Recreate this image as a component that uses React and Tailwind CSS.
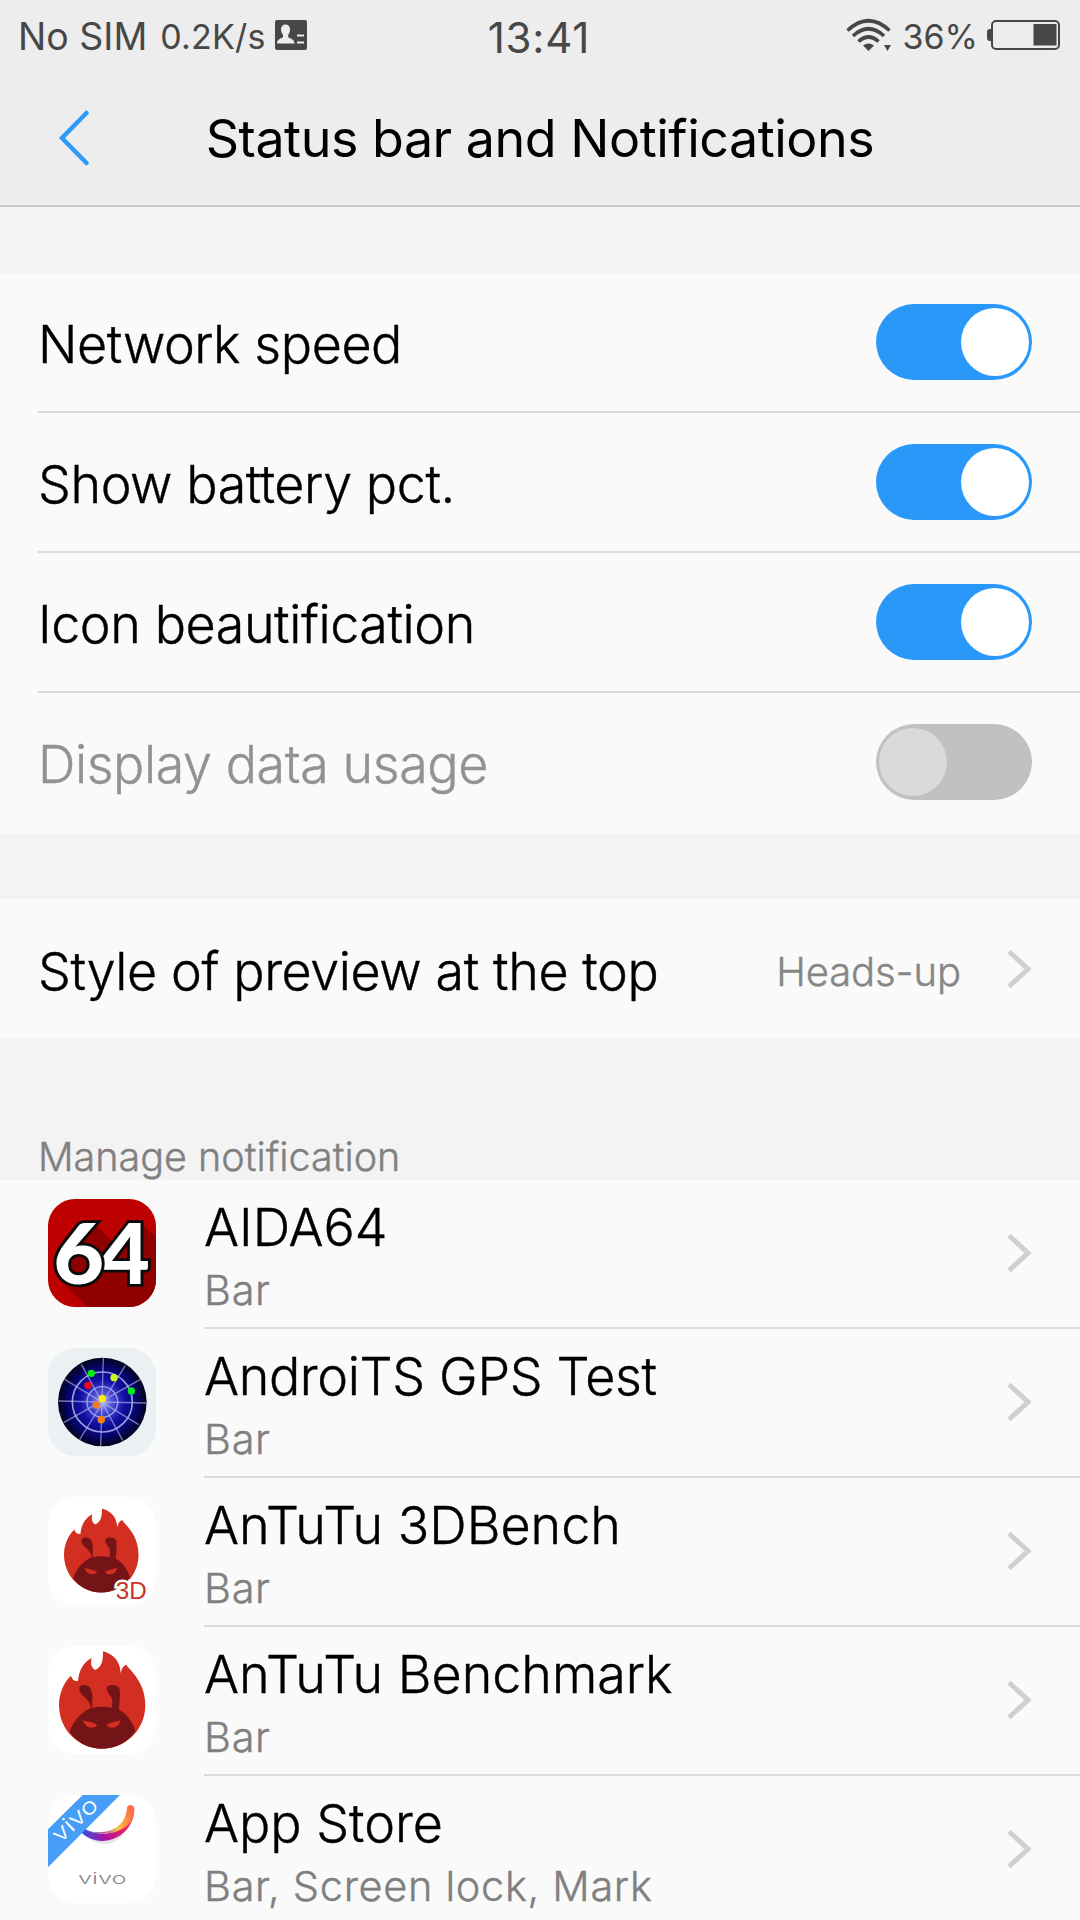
import React from 'react';

const switches = [
  { name: 'Network speed', on: true },
  { name: 'Show battery pct.', on: true },
  { name: 'Icon beautification', on: true },
  { name: 'Display data usage', on: false, disabled: true },
];

const AidaIcon = () => (
  <svg viewBox="54 57 324 324" className="h-[108px] w-[108px] rounded-[27px]">
    <rect x="54" y="57" width="324" height="324" fill="#bd0000" />
    <path d="M186 124l60 60 50-56h34l48 42v211H172L96 306z" fill="#8f0000" />
    <g
      fontFamily="Lato"
      fontWeight="900"
      fontSize="250"
      fill="#fff"
      stroke="#0b0b0b"
      strokeWidth="17"
      paintOrder="stroke"
    >
      <text x="207" y="311" textLength="153" lengthAdjust="spacingAndGlyphs">4</text>
      <text x="70" y="311" textLength="153" lengthAdjust="spacingAndGlyphs">6</text>
    </g>
  </svg>
);

const GpsIcon = () => (
  <svg viewBox="54 39 324 324" className="h-[108px] w-[108px] rounded-[27px]">
    <defs>
      <radialGradient id="radar">
        <stop offset="0" stopColor="#b9b9ff" />
        <stop offset="0.2" stopColor="#5558d6" />
        <stop offset="0.5" stopColor="#1010a4" />
        <stop offset="0.78" stopColor="#05056a" />
        <stop offset="1" stopColor="#02021c" />
      </radialGradient>
    </defs>
    <rect x="54" y="39" width="324" height="324" fill="#ebf1f3" />
    <circle cx="217" cy="201" r="133" fill="url(#radar)" />
    <g fill="none" stroke="#b4b4f0" strokeOpacity="0.85" strokeWidth="4">
      <circle cx="217" cy="201" r="46" />
      <circle cx="217" cy="201" r="90" strokeWidth="5" />
      <path
        strokeOpacity="0.65"
        d="M220 69L212 333M85 198l264 6M154 88l124 228M286 91L149 314M104 133l222 136M330 134L101 263"
      />
    </g>
    <circle cx="184" cy="115" r="11" fill="#00ee18" />
    <circle cx="304" cy="168" r="11" fill="#00ee18" />
    <circle cx="252" cy="128" r="11" fill="#c8fb1c" />
    <circle cx="174" cy="151" r="11" fill="#fb0510" />
    <circle cx="217" cy="191" r="11" fill="#fff000" />
    <circle cx="199" cy="210" r="11" fill="#f57d1c" />
    <circle cx="214" cy="254" r="11" fill="#fb800c" />
  </svg>
);

const Flame = () => (
  <>
    <path
      d="M219 64C236 69 271 83 272 130C275 118 278 108 289 104C299 121 346 154 346 225C346 299 288 356 216 356C145 356 87 299 87 225C87 193 100 158 123 137C127 149 132 153 144 153C147 124 157 99 185 84C182 98 182 112 196 120C214 112 220 93 219 64Z"
      fill="#d22e21"
    />
    <path
      d="M119 305C136 258 172 238 183 235C179 215 175 212 156 194C145 183 143 166 160 165C177 163 182 173 186 188C189 204 185 220 187 234Q217 226 246 234C246 220 249 210 242 199C234 188 226 176 233 169C243 162 260 164 267 173C273 184 268 218 267 239C286 247 309 275 316 303C294 337 258 356 216 356C175 356 140 337 119 305Z"
      fill="#751417"
    />
    <path
      d="M158 270C173 276 188 275 202 285C198 292 189 294 181 293C171 292 163 284 158 270ZM272 270C257 276 244 275 229 285C233 292 242 294 250 293C260 292 268 284 272 270Z"
      fill="#d22e21"
    />
  </>
);

const Antutu3dIcon = () => (
  <svg viewBox="54 51 324 324" className="h-[108px] w-[108px] rounded-[27px]">
    <rect x="54" y="51" width="324" height="324" fill="#fff" />
    <g transform="translate(27 30) scale(0.863)">
      <Flame />
    </g>
    <text
      x="257"
      y="356"
      fontFamily="Liberation Sans"
      fontSize="71"
      textLength="93"
      lengthAdjust="spacingAndGlyphs"
      fill="#c93427"
      stroke="#fff"
      strokeWidth="15"
      paintOrder="stroke"
    >
      3D
    </text>
  </svg>
);

const AntutuIcon = () => (
  <svg viewBox="54 48 324 324" className="h-[108px] w-[108px] rounded-[27px]">
    <rect x="54" y="48" width="324" height="324" fill="#fff" />
    <Flame />
  </svg>
);

const StoreIcon = () => (
  <svg viewBox="54 45 324 324" className="h-[108px] w-[108px] overflow-visible">
    <defs>
      <linearGradient id="smile" x1="150" y1="150" x2="312" y2="90" gradientUnits="userSpaceOnUse">
        <stop offset="0" stopColor="#2f55dc" />
        <stop offset="0.35" stopColor="#a812a8" />
        <stop offset="0.68" stopColor="#e01f69" />
        <stop offset="1" stopColor="#ff5f45" />
      </linearGradient>
      <linearGradient id="glow" x1="160" y1="150" x2="305" y2="100" gradientUnits="userSpaceOnUse">
        <stop offset="0" stopColor="#29dcf2" />
        <stop offset="0.35" stopColor="#b45ba0" />
        <stop offset="0.65" stopColor="#ffc04a" />
        <stop offset="1" stopColor="#ff7043" />
      </linearGradient>
      <clipPath id="tile">
        <rect x="54" y="45" width="324" height="324" rx="81" />
      </clipPath>
    </defs>
    <g clipPath="url(#tile)">
      <rect x="54" y="45" width="324" height="324" fill="#fff" />
      <path d="M155 158Q222 216 276 166Q222 204 155 158Z" fill="#ddd" stroke="#e4e4e8" strokeWidth="5" />
      <path d="M291 86C291 72 313 72 313 88C312 145 267 182 217 183C187 183 160 168 143 145L158 142C205 175 287 170 291 86Z" fill="url(#smile)" />
      <path d="M291 86C291 72 313 72 313 88C312 102 309 113 301 127C265 166 210 173 151 143C205 170 284 158 291 86Z" fill="url(#glow)" />
      <path d="M54 148L158 45H270L54 262Z" fill="#469ef8" />
    </g>
    <text
      transform="translate(91 191) rotate(-43) scale(1.5 1)"
      fontFamily="Inter"
      fontSize="69"
      textLength="108"
      lengthAdjust="spacingAndGlyphs"
      fill="#fff"
    >
      vivo
    </text>
    <text
      transform="translate(144 312) scale(1.5 1)"
      fontFamily="Inter"
      fontSize="47"
      textLength="97"
      lengthAdjust="spacingAndGlyphs"
      fill="#8a8a8a"
    >
      vivo
    </text>
  </svg>
);

const apps = [
  { name: 'AIDA64', detail: 'Bar', icon: AidaIcon },
  { name: 'AndroiTS GPS Test', detail: 'Bar', icon: GpsIcon, tight: true },
  { name: 'AnTuTu 3DBench', detail: 'Bar', icon: Antutu3dIcon },
  { name: 'AnTuTu Benchmark', detail: 'Bar', icon: AntutuIcon },
  { name: 'App Store', detail: 'Bar, Screen lock, Mark', icon: StoreIcon },
];

const Switch = ({ on }) => (
  <div
    className={`flex h-[76px] w-[156px] shrink-0 items-center rounded-full px-[3px] ${
      on ? 'justify-end bg-[#2998f8]' : 'justify-start bg-[#c1c1c1]'
    }`}
  >
    <div className={`h-[68px] w-[68px] rounded-full ${on ? 'bg-white' : 'bg-[#dadada]'}`} />
  </div>
);

const Chevron = () => (
  <svg viewBox="0 0 26 40" className="h-10 w-[26px] shrink-0" fill="none" stroke="#d0d0d0" strokeWidth="5">
    <path d="M3 2.5L22 20L3 37.5" />
  </svg>
);

const StatusBar = () => (
  <div className="flex h-[72px] items-center text-[#474747]">
    <div className="flex flex-1 items-center pl-[18px]">
      <span className="pt-0.5 text-[37.5px]">No SIM</span>
      <span className="ml-[13px] text-[34px] tracking-[0.2px]">0.2K/s</span>
      <svg viewBox="0 0 32 30" className="ml-[9px] mt-[-3px] h-[30px] w-8">
        <rect width="32" height="30" rx="2" fill="#474747" />
        <path
          d="M10.5 4.5c3 0 4.500 2 4.500 5 0 2.500-.8 4-1.800 5.200v2.500c2.500 1.600 6.300 2 6.300 6.300H2c0-4.300 3.500-4.700 6-6.300v-2.500C7 13.500 6 12 6 9.500c0-3 1.500-5 4.500-5z"
          fill="#ededed"
        />
        <path d="M22 15.500h7M22 22.500h7" stroke="#ededed" strokeWidth="2.200" />
      </svg>
    </div>
    <span className="pt-[3px] text-[42px] tracking-[0.8px]">13:41</span>
    <div className="flex flex-1 items-center justify-end pr-5">
      <svg viewBox="0 0 46 34" className="mt-[-2px] h-[34px] w-[46px]" fill="none" stroke="#474747" strokeWidth="3.600">
        <path d="M1.500 12.500Q22.500-7 43.500 12.500" />
        <path d="M7 18Q22.500 3.500 38 18" />
        <path d="M12.500 23.500Q22.500 14.500 32.500 23.500" />
        <path d="M17 27.500Q22.500 23.500 28 27.500L22.500 33z" fill="#474747" stroke="none" />
        <path d="M38 27h7l-3.500 6z" fill="#474747" stroke="none" />
      </svg>
      <span className="ml-[11px] text-[34px]">36%</span>
      <svg viewBox="0 0 73 30" className="ml-[9px] mt-[-3px] h-[30px] w-[73px]">
        <path d="M4 9v12H3a3 3 0 0 1-3-3v-6a3 3 0 0 1 3-3z" fill="#474747" />
        <rect x="5" y="1" width="67" height="28" rx="4" fill="none" stroke="#474747" strokeWidth="2" />
        <rect x="46.500" y="4" width="23" height="21.500" fill="#474747" />
      </svg>
    </div>
  </div>
);

export default function App() {
  return (
    <div className="h-[1920px] w-[1080px] overflow-hidden bg-[#f3f3f3] font-['Inter',sans-serif] text-black">
      <header className="h-[207px] border-b-2 border-[#c9c9c9] bg-[#ededed]">
        <StatusBar />
        <div className="grid h-[133px] grid-cols-[204px_1fr_204px] items-center">
          <svg viewBox="0 0 32 56" className="mb-0.5 ml-[58px] h-14 w-8" fill="none" stroke="#2e9bf8" strokeWidth="4.500">
            <path d="M28.500 3L4 28L28.500 53" strokeLinecap="round" />
          </svg>
          <h1 className="whitespace-nowrap text-center text-[52px] tracking-[-0.48px]">Status bar and Notifications</h1>
        </div>
      </header>

      {/* Light text gets a hairline stroke, the weight sits between light and regular */}
      <main className="font-light [-webkit-text-stroke:0.4px_currentColor]">
        <section className="mt-[66px] bg-[#fafafa]">
          {switches.map((item, i) => (
            <div key={item.name} className="pl-[38px]">
              <div
                className={`flex h-[140px] items-center justify-between border-b-2 pr-12 ${
                  i < switches.length - 1 ? 'border-[#dbdbdb]' : 'border-transparent'
                }`}
              >
                <span
                  className={`pt-[5px] text-[52px] tracking-[-0.42px] ${item.disabled ? 'text-[#929292]' : ''}`}
                >
                  {item.name}
                </span>
                <Switch on={item.on} />
              </div>
            </div>
          ))}
        </section>

        <section className="mt-[66px] flex h-[140px] items-center bg-[#fafafa] pl-[38px] pr-12">
          <span className="flex-1 pt-[5px] text-[52px] tracking-[-0.4px]">Style of preview at the top</span>
          <span className="mr-[45px] pt-[5px] text-[40px] tracking-[-0.1px] text-[#868686]">Heads-up</span>
          <Chevron />
        </section>

        <div className="flex h-[141px] items-end pl-[38px]">
          <h2 className="text-[39.5px] leading-[46px] text-[#808080]">Manage notification</h2>
        </div>

        {/* App list */}
        <section className="bg-[#fafafa]">
          {apps.map((app) => (
            <div key={app.name} className="flex h-[149px]">
              <div className="flex w-[204px] items-center pl-12 pb-[3px] [-webkit-text-stroke:0]">
                <app.icon />
              </div>
              <div className="flex flex-1 items-center justify-between border-b-2 border-[#dbdbdb] pr-12">
                <div className="h-full pt-[18px]">
                  <div className={`text-[52px] leading-[60px] ${app.tight ? 'tracking-[-0.35px]' : ''}`}>
                    {app.name}
                  </div>
                  <div className="text-[41.5px] leading-[64px] tracking-[0.68px] text-[#808080]">{app.detail}</div>
                </div>
                <div className="pb-px">
                  <Chevron />
                </div>
              </div>
            </div>
          ))}
        </section>
      </main>
    </div>
  );
}
